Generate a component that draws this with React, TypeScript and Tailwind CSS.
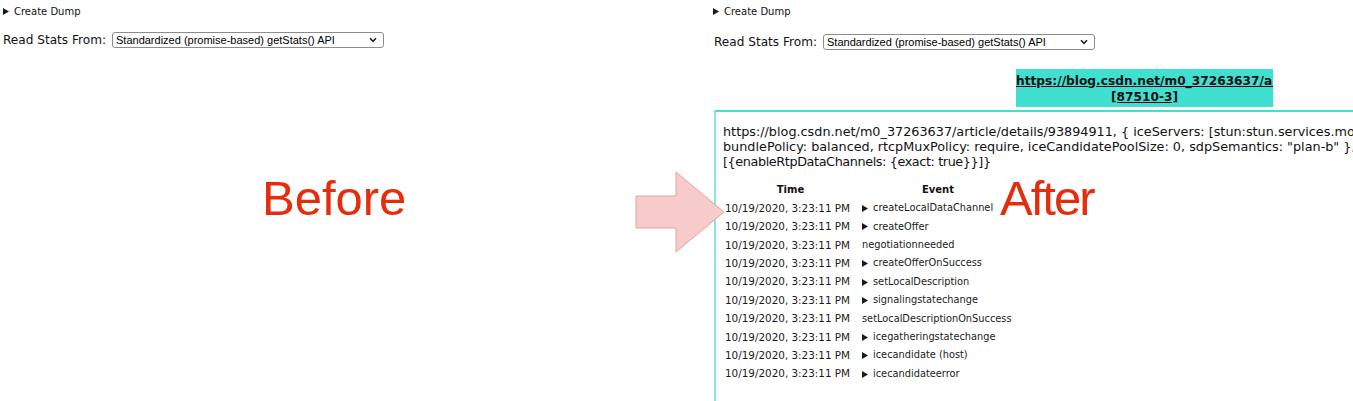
import React from "react";

const Tri = () => (
  <svg width="6" height="7" viewBox="0 0 6 7" className="shrink-0">
    <path d="M0 0 L6 3.5 L0 7 Z" fill="#1a1a1a" />
  </svg>
);

const Summary = () => (
  <div className="flex h-[14px] items-center gap-[5px] text-[10px] text-[#111]">
    <Tri />
    <span className="font-['DejaVu_Sans',sans-serif]">Create Dump</span>
  </div>
);

const ReadStats = () => (
  <div className="flex h-[16px] items-center gap-[6px]">
    <span className="font-['DejaVu_Sans',sans-serif] text-[12.1px] text-[#111]">Read Stats From:</span>
    <div className="flex h-[16px] w-[272px] items-center justify-between rounded-[3px] border border-[#8c8c8c] bg-white pl-[3px] pr-[6px]">
      <span className="font-['Liberation_Sans',Arial,sans-serif] text-[11px] leading-none text-black">
        Standardized (promise-based) getStats() API
      </span>
      <svg width="8" height="6" viewBox="0 0 8 6">
        <path d="M1 1.2 L4 4.4 L7 1.2" fill="none" stroke="#222" strokeWidth="1.6" />
      </svg>
    </div>
  </div>
);

const rows: { ev: string; tri: boolean }[] = [
  { ev: "createLocalDataChannel", tri: true },
  { ev: "createOffer", tri: true },
  { ev: "negotiationneeded", tri: false },
  { ev: "createOfferOnSuccess", tri: true },
  { ev: "setLocalDescription", tri: true },
  { ev: "signalingstatechange", tri: true },
  { ev: "setLocalDescriptionOnSuccess", tri: false },
  { ev: "icegatheringstatechange", tri: true },
  { ev: "icecandidate (host)", tri: true },
  { ev: "icecandidateerror", tri: true },
];

export default function App() {
  return (
    <div className="relative flex h-[401px] w-[1353px] overflow-hidden bg-white font-['DejaVu_Sans',sans-serif] text-black">
      {/* Before */}
      <div className="w-[711px] shrink-0 pl-[3px] pt-[4px]">
        <Summary />
        <div className="mt-[14px]">
          <ReadStats />
        </div>
      </div>

      {/* After */}
      <div className="flex min-w-0 flex-1 flex-col pt-[4px]">
        <div className="pl-[2px]">
          <Summary />
          <div className="mt-[16px] pl-[1px]">
            <ReadStats />
          </div>
        </div>

        <div className="ml-[305px] mt-[19px] h-[38px] w-[257px] shrink-0 overflow-hidden bg-[#40e0d0] pt-[5px] font-['DejaVu_Sans',sans-serif] text-[12.2px] font-bold leading-[15.5px] text-[#111]">
          <div className="whitespace-nowrap underline">
            https://blog.csdn.net/m0_37263637/article/details/93894911
          </div>
          <div className="text-center underline">[87510-3]</div>
        </div>

        <div className="ml-[3px] mt-[3px] w-[900px] flex-1 border-l-2 border-t-2 border-l-[#86e9e0] border-t-[#40e0d0] pl-[7px] pt-[12px]">
          <div className="whitespace-nowrap text-[12.8px] leading-[15px] text-[#111]">
            <div>
              https://blog.csdn.net/m0_37263637/article/details/93894911, {"{"} iceServers: [stun:stun.services.mozilla.com], iceTransportPolicy: all,
            </div>
            <div>
              bundlePolicy: balanced, rtcpMuxPolicy: require, iceCandidatePoolSize: 0, sdpSemantics: "plan-b" {"}"}, {"{"}advanced:
            </div>
            <div className="tracking-[-0.4px]">[{"{"}enableRtpDataChannels: {"{"}exact: true{"}}"}]{"}"}</div>
          </div>

          <div className="mt-[11px] w-[300px]">
            <div className="flex h-[19.4px] items-center text-[10px] font-bold text-[#111]">
              <div className="w-[135px] text-center">Time</div>
              <div className="w-[160px] text-center">Event</div>
            </div>
            {rows.map((r, i) => (
              <div key={i} className="flex h-[18.4px] items-center text-[#1a1a1a]">
                <div className="w-[135px] shrink-0 pl-[2px] text-[10.4px]">10/19/2020, 3:23:11 PM</div>
                <div className="flex items-center gap-[5px] pl-[4px] text-[9.8px]">
                  {r.tri && <Tri />}
                  <span>{r.ev}</span>
                </div>
              </div>
            ))}
          </div>
        </div>
      </div>

      {/* annotations */}
      <div className="absolute left-[262px] top-[174px] font-['Liberation_Sans',Arial,sans-serif] text-[49px] leading-none text-[#e52d0b]">
        Before
      </div>
      <div className="absolute left-[1000px] top-[174px] font-['Liberation_Sans',Arial,sans-serif] text-[49px] leading-none tracking-[-2px] text-[#e52d0b]">
        After
      </div>
      <svg
        className="absolute left-[635px] top-[171px]"
        width="91"
        height="83"
        viewBox="0 0 91 83"
      >
        <polygon
          points="1,25 41,25 41,1 89,41 41,81 41,57 1,57"
          fill="#f6cbca"
          stroke="#e4a4a1"
          strokeWidth="1"
        />
      </svg>
    </div>
  );
}
